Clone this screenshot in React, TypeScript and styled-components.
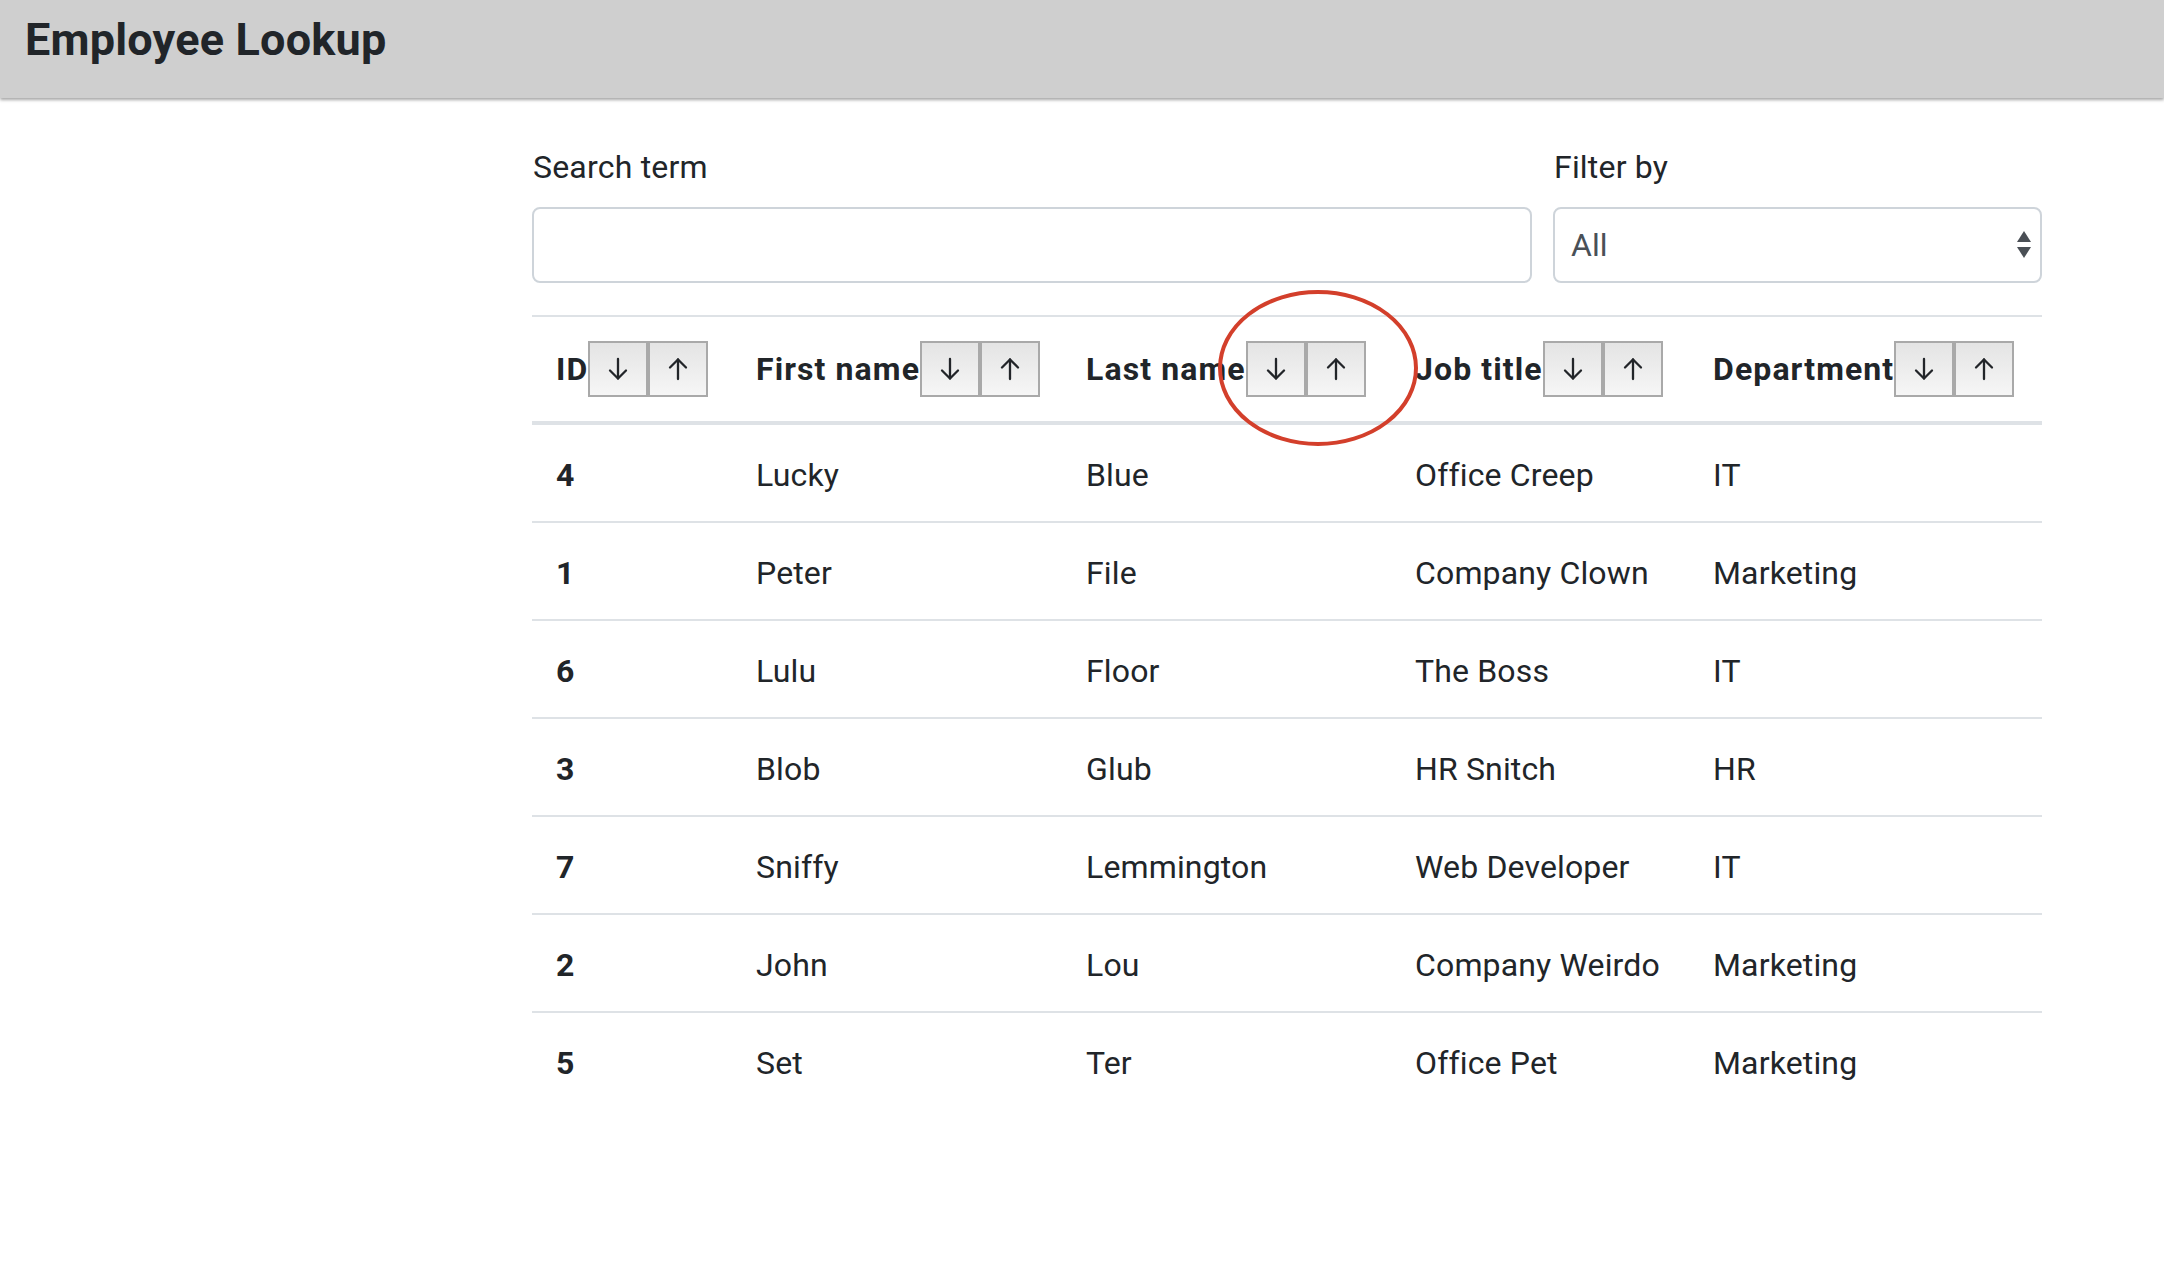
import React from "react";
import styled, { createGlobalStyle } from "styled-components";

const GlobalStyle = createGlobalStyle`
  html, body { margin: 0; padding: 0; background: #ffffff; }
  body {
    font-family: Roboto, "Liberation Sans", Arial, sans-serif;
    font-size: 32px;
    line-height: 1.5;
    color: #212529;
  }
  * { box-sizing: border-box; }
`;

const Page = styled.div`
  position: relative;
  width: 2164px;
  min-height: 1288px;
`;

const TopBar = styled.header`
  height: 98px;
  background: #cfcfcf;
  box-shadow: 0 2px 3px rgba(0, 0, 0, 0.35);
  padding: 12px 0 0 25px;
`;

const Title = styled.h1`
  margin: 0;
  font-size: 45px;
  font-weight: 700;
  line-height: 56px;
  color: #212529;
  letter-spacing: 0.2px;
`;

const Main = styled.main`
  width: 1510px;
  margin-left: 532px;
  padding-top: 45px;
`;

const FormRow = styled.div`
  display: grid;
  grid-template-columns: 1000px 489px;
  column-gap: 21px;
  margin-bottom: 32px;
`;

const Field = styled.div`
  display: flex;
  flex-direction: column;
`;

const Label = styled.label`
  display: block;
  line-height: 48px;
  margin: 0 0 16px 1px;
  letter-spacing: 0.2px;
`;

const TextInput = styled.input`
  height: 76px;
  width: 100%;
  border: 2px solid #ced4da;
  border-radius: 8px;
  padding: 0 24px;
  font: inherit;
  color: #495057;
  background: #fff;
  outline: none;
`;

const SelectWrap = styled.div`
  position: relative;
  height: 76px;
`;

const Select = styled.select`
  appearance: none;
  -webkit-appearance: none;
  height: 76px;
  width: 100%;
  border: 2px solid #ced4da;
  border-radius: 8px;
  padding: 0 40px 0 16px;
  font: inherit;
  color: #495057;
  background: #fff;
  outline: none;
`;

const SelectArrows = styled.svg`
  position: absolute;
  right: 10px;
  top: 23px;
  pointer-events: none;
`;

const Table = styled.table`
  width: 1510px;
  border-collapse: collapse;
  table-layout: fixed;
`;

const HeadCell = styled.th`
  text-align: left;
  font-weight: 700;
  letter-spacing: 1.1px;
  padding: 24px 0 24px 24px;
  border-top: 2px solid #dee2e6;
  border-bottom: 4px solid #dee2e6;
  vertical-align: middle;
  white-space: nowrap;
`;

const HeadInner = styled.div`
  display: flex;
  align-items: center;
  height: 56px;
`;

const SortButton = styled.button`
  width: 60px;
  height: 56px;
  margin: 0;
  padding: 0;
  display: inline-flex;
  align-items: center;
  justify-content: center;
  border: 2px solid #a9a9a9;
  background: linear-gradient(#e4e4e4, #f6f6f6);
  cursor: pointer;
`;

const Row = styled.tr`
  border-bottom: 2px solid #dee2e6;
  &:last-child { border-bottom: none; }
`;

const Cell = styled.td<{ $bold?: boolean }>`
  padding: 26px 0 22px 24px;
  line-height: 48px;
  font-weight: ${(p) => (p.$bold ? 700 : 400)};
  letter-spacing: 0.15px;
  white-space: nowrap;
`;

const Annotation = styled.svg`
  position: absolute;
  left: 1216px;
  top: 288px;
  pointer-events: none;
`;

const ArrowIcon = ({ up }: { up?: boolean }) => (
  <svg width="22" height="24" viewBox="0 0 22 24" fill="none">
    <g stroke="#222529" strokeWidth="2.3" strokeLinecap="round" strokeLinejoin="round">
      {up ? (
        <>
          <line x1="11" y1="2.5" x2="11" y2="22" />
          <polyline points="3,10.5 11,2.5 19,10.5" />
        </>
      ) : (
        <>
          <line x1="11" y1="2" x2="11" y2="21.5" />
          <polyline points="3,13.5 11,21.5 19,13.5" />
        </>
      )}
    </g>
  </svg>
);

const columns = [
  { label: "ID", width: 200 },
  { label: "First name", width: 330 },
  { label: "Last name", width: 329 },
  { label: "Job title", width: 298 },
  { label: "Department", width: 353 },
];

const employees = [
  { id: 4, first: "Lucky", last: "Blue", job: "Office Creep", dept: "IT" },
  { id: 1, first: "Peter", last: "File", job: "Company Clown", dept: "Marketing" },
  { id: 6, first: "Lulu", last: "Floor", job: "The Boss", dept: "IT" },
  { id: 3, first: "Blob", last: "Glub", job: "HR Snitch", dept: "HR" },
  { id: 7, first: "Sniffy", last: "Lemmington", job: "Web Developer", dept: "IT" },
  { id: 2, first: "John", last: "Lou", job: "Company Weirdo", dept: "Marketing" },
  { id: 5, first: "Set", last: "Ter", job: "Office Pet", dept: "Marketing" },
];

export default function App() {
  return (
    <Page>
      <GlobalStyle />
      <TopBar>
        <Title>Employee Lookup</Title>
      </TopBar>
      <Main>
        <FormRow>
          <Field>
            <Label htmlFor="search">Search term</Label>
            <TextInput id="search" type="text" />
          </Field>
          <Field>
            <Label htmlFor="filter">Filter by</Label>
            <SelectWrap>
              <Select id="filter" defaultValue="All">
                <option>All</option>
                <option>IT</option>
                <option>Marketing</option>
                <option>HR</option>
              </Select>
              <SelectArrows width="16" height="30" viewBox="0 0 16 30">
                <polygon points="8,1 15,12 1,12" fill="#4a4f55" />
                <polygon points="1,17 15,17 8,28" fill="#4a4f55" />
              </SelectArrows>
            </SelectWrap>
          </Field>
        </FormRow>
        <Table>
          <colgroup>
            {columns.map((c) => (
              <col key={c.label} style={{ width: c.width }} />
            ))}
          </colgroup>
          <thead>
            <tr>
              {columns.map((c) => (
                <HeadCell key={c.label}>
                  <HeadInner>
                    {c.label}
                    <SortButton aria-label={`Sort ${c.label} descending`}>
                      <ArrowIcon />
                    </SortButton>
                    <SortButton aria-label={`Sort ${c.label} ascending`}>
                      <ArrowIcon up />
                    </SortButton>
                  </HeadInner>
                </HeadCell>
              ))}
            </tr>
          </thead>
          <tbody>
            {employees.map((e) => (
              <Row key={e.id}>
                <Cell $bold>{e.id}</Cell>
                <Cell>{e.first}</Cell>
                <Cell>{e.last}</Cell>
                <Cell>{e.job}</Cell>
                <Cell>{e.dept}</Cell>
              </Row>
            ))}
          </tbody>
        </Table>
      </Main>
      <Annotation width="204" height="160" viewBox="0 0 204 160">
        <ellipse cx="102" cy="80" rx="98" ry="76" fill="none" stroke="#d33f2b" strokeWidth="4" />
      </Annotation>
    </Page>
  );
}
